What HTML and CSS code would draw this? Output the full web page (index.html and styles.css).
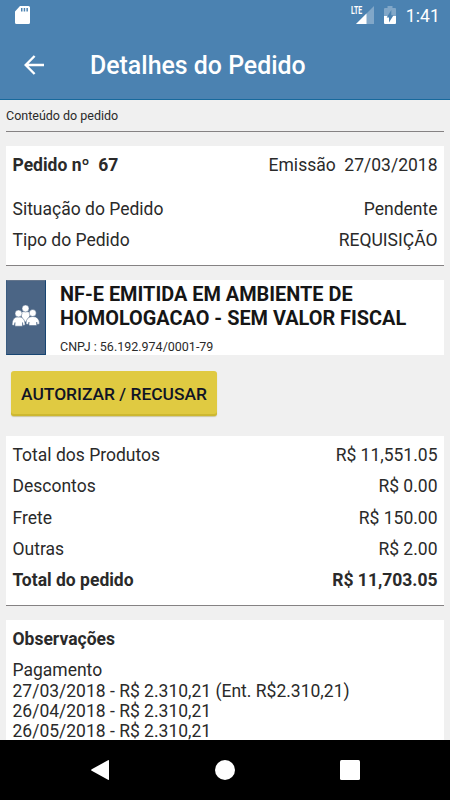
FILE: index.html
```
<!DOCTYPE html>
<html lang="pt-BR">
<head>
    <meta charset="UTF-8">
    <meta name="viewport" content="width=device-width, initial-scale=1.0">
    <title>Detalhes do Pedido</title>
    <link rel="stylesheet" href="styles.css">
</head>
<body>
    <header class="app-header">
        <div class="status-bar">
            <svg class="sd-card" width="15" height="19" viewBox="0 0 15 19">
                <path fill="#fff" fill-rule="evenodd" d="M5 0H13.5Q15 0 15 1.5V16.500Q15 18 13.500 18H1.500Q0 18 0 16.500V5.500ZM6 2V5.500H7.500V2ZM8.700 2V5.500H10.200V2ZM11.400 2V5.500H12.900V2Z"/>
            </svg>
            <div class="status-icons">
                <span class="lte">LTE</span>
                <svg class="signal" width="18" height="18" viewBox="0 0 18 18">
                    <path fill="#fff" fill-opacity=".3" d="M18 0V18H0Z"/>
                    <path fill="#fff" d="M10.500 7.500V18H0Z"/>
                </svg>
                <svg class="battery" width="12" height="18" viewBox="0 0 12 18">
                    <path fill="#fff" fill-opacity=".3" d="M3.500 0H8.500V2H11Q12 2 12 3V10H0V3Q0 2 1 2H3.500Z"/>
                    <path fill="#fff" d="M0 10H12V17Q12 18 11 18H1Q0 18 0 17Z"/>
                    <path fill="#4b82b1" d="M7.300 4V9.300H9.500L5 16.500V11.500H2.700Z"/>
                </svg>
                <span class="clock">1:41</span>
            </div>
        </div>
        <div class="toolbar">
            <svg class="back" width="20" height="20" viewBox="0 0 20 20">
                <path d="M20 10H1.700M10.600 1L1.700 10L10.600 19" fill="none" stroke="#fff" stroke-width="2.400"/>
            </svg>
            <h1>Detalhes do Pedido</h1>
        </div>
    </header>

    <main class="content">
        <div class="section-label">Conteúdo do pedido</div>

        <section class="card order">
            <div class="row strong-label"><b>Pedido nº&nbsp; 67</b><span>Emissão&nbsp; 27/03/2018</span></div>
            <div class="row"><span>Situação do Pedido</span><span>Pendente</span></div>
            <div class="row"><span>Tipo do Pedido</span><span>REQUISIÇÃO</span></div>
        </section>

        <section class="company">
            <div class="company-icon">
                <svg width="28" height="22" viewBox="0 0 28 22">
                    <g fill="#fff" stroke="#4b6585" stroke-width=".5">
                        <path d="M8 8Q10 6.500 13.500 6.500T19 8L16 15L13.500 17L11 15Z"/>
                        <circle cx="13.500" cy="3.500" r="3.500"/>
                        <path d="M0 20Q0 11.800 6.500 11.800T13.200 20L11 20.500L10.500 17.500V21.200H3V17.500L2.300 20.500Z"/>
                        <circle cx="6.500" cy="8.500" r="3.500"/>
                        <path d="M14 19Q14 11.500 20.700 11.500T27.500 19L25.200 19.500L24.700 17V20.500H17V17L16.300 19.500Z"/>
                        <circle cx="20.700" cy="8" r="3.500"/>
                    </g>
                </svg>
            </div>
            <div class="company-info">
                <h2>NF-E EMITIDA EM AMBIENTE DE HOMOLOGACAO - SEM VALOR FISCAL</h2>
                <p>CNPJ : 56.192.974/0001-79</p>
            </div>
        </section>

        <button class="authorize">AUTORIZAR / RECUSAR</button>

        <section class="card totals">
            <div class="row"><span>Total dos Produtos</span><span>R$ 11,551.05</span></div>
            <div class="row"><span>Descontos</span><span>R$ 0.00</span></div>
            <div class="row"><span>Frete</span><span>R$ 150.00</span></div>
            <div class="row"><span>Outras</span><span>R$ 2.00</span></div>
            <div class="row"><b>Total do pedido</b><b>R$ 11,703.05</b></div>
        </section>

        <section class="card notes">
            <div class="row"><b>Observações</b></div>
            <p>Pagamento<br>
            27/03/2018 - R$ 2.310,21 (Ent. R$2.310,21)<br>
            26/04/2018 - R$ 2.310,21<br>
            26/05/2018 - R$ 2.310,21</p>
        </section>
    </main>

    <nav class="nav-bar">
        <svg width="20" height="22" viewBox="0 0 20 22">
            <path fill="#fff" d="M18 1.300Q19 .7 19 1.800V20.200Q19 21.300 18 20.700L1.700 11.800Q.5 11 1.700 10.200Z"/>
        </svg>
        <svg width="20" height="20" viewBox="0 0 20 20"><circle cx="10" cy="10" r="10" fill="#fff"/></svg>
        <svg width="20" height="20" viewBox="0 0 20 20"><rect width="20" height="20" rx="1.500" fill="#fff"/></svg>
    </nav>
</body>
</html>
```
FILE: styles.css
```
* { box-sizing: border-box; }
body {
    margin: 0;
    height: 800px;
    display: flex;
    flex-direction: column;
    overflow: hidden;
    background: #f0f0f0;
    color: #2a2a2a;
    font-family: Roboto, sans-serif;
    font-size: 17.5px;
}
h1, h2, p { margin: 0; }
svg { display: block; flex: none; }

.app-header {
    flex: none;
    height: 100px;
    background: #4b82b1;
    border-bottom: 1px solid #17699c;
    color: #fff;
}
.status-bar {
    height: 30px;
    padding: 6px 10px 0 15px;
    display: flex;
    justify-content: space-between;
}
.status-icons { display: flex; }
.lte {
    font-size: 10.5px;
    font-weight: 700;
    line-height: 9px;
    width: 12px;
    margin-right: -7px;
    transform: scaleX(.66);
    transform-origin: left;
}
.battery { margin: 0 10px 0 10px; }
.clock { font-size: 17.5px; font-weight: 400; line-height: 20px; letter-spacing: .1px; }
.toolbar {
    height: 70px;
    padding-left: 24px;
    display: flex;
    align-items: center;
}
.back { margin-top: -1px; }
h1 { margin: 1px 0 0 46px; font-size: 24.9px; font-weight: 500; }

.content {
    flex: 1;
    min-height: 0;
    overflow: hidden;
    padding: 0 6px;
    background: #f0f0f0;
}
.section-label {
    height: 32px;
    line-height: 31px;
    font-size: 12.5px;
    border-bottom: 1px solid #858283;
    margin-bottom: 14px;
}
.card {
    background: #fff;
    padding: 4px 6.5px 8px;
    border-bottom: 1px solid #858283;
    margin-bottom: 14px;
}
.row {
    display: flex;
    justify-content: space-between;
    line-height: 31.25px;
}
.order { height: 120px; }
.strong-label { margin-bottom: 12.5px; }

.company {
    display: flex;
    height: 75px;
    background: #fff;
    margin-bottom: 16px;
}
.company-icon {
    width: 40px;
    display: flex;
    align-items: center;
    justify-content: center;
    background: #4b6585;
    border: 1px solid #174572;
    border-top-color: #64758c;
    border-left-color: #3b5c80;
    padding-bottom: 4px;
}
.company-info { padding: 3px 0 0 14px; flex: 1; }
h2 { font-size: 19.9px; font-weight: 700; line-height: 23.5px; color: #161616; }
.company-info p { font-size: 12.5px; line-height: 16px; margin-top: 9px; }

.authorize {
    display: block;
    width: 206px;
    height: 45px;
    margin: 0 0 20px 5px;
    padding: 0;
    border: 0;
    border-radius: 3px;
    background: #e0ca41;
    box-shadow: inset 0 -2px #cdb830, 0 1px 1px #ccc6a0;
    color: #101426;
    font: 500 17.4px Roboto, sans-serif;
}
.totals { height: 170px; }
.notes { border: 0; }
.notes p { line-height: 20.4px; padding-top: 5px; }

.nav-bar {
    flex: none;
    height: 60px;
    background: #000;
    display: flex;
    align-items: center;
    justify-content: center;
    gap: 105px;
}
```
